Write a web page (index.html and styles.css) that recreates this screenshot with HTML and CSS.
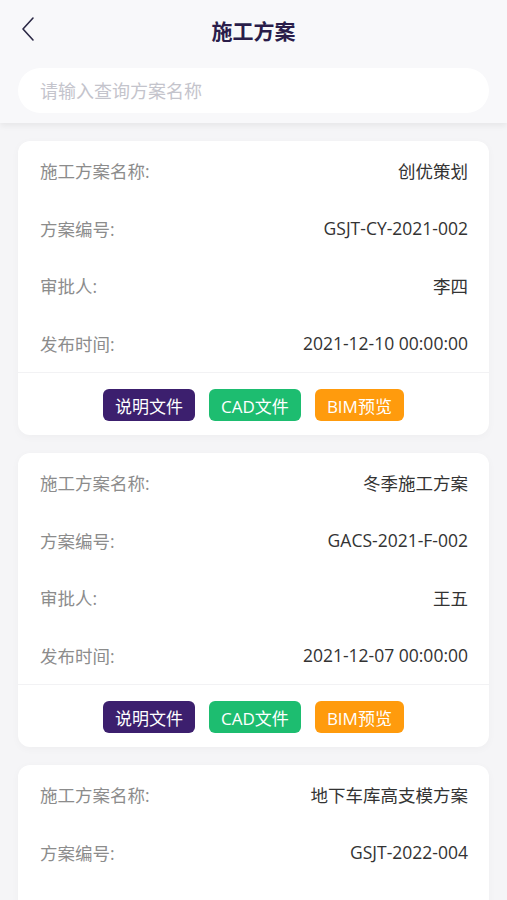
FILE: index.html
```html
<!DOCTYPE html>
<html>
    <head>
        <meta charset="utf-8">
        <meta name="viewport" content="width=device-width, initial-scale=1.0">
        <title>施工方案</title>
        <link rel="stylesheet" href="styles.css">
    </head>
    <body>

        <div class="header">
            <div class="nav">
                <a class="back" href="#">
                    <svg width="16" height="26" viewBox="0 0 16 26">
                        <polyline points="13,2 3,13 13,24" fill="none" stroke="#2b2845" stroke-width="1.6" stroke-linecap="round" stroke-linejoin="round"/>
                    </svg>
                </a>
                <h1 class="title">施工方案</h1>
            </div>
            <div class="search">
                <input type="text" placeholder="请输入查询方案名称">
            </div>
        </div>

        <div class="list">
            <div class="card">
                <div class="row"><span class="label">施工方案名称:</span><span class="value">创优策划</span></div>
                <div class="row"><span class="label">方案编号:</span><span class="value">GSJT-CY-2021-002</span></div>
                <div class="row"><span class="label">审批人:</span><span class="value">李四</span></div>
                <div class="row"><span class="label">发布时间:</span><span class="value">2021-12-10 00:00:00</span></div>
                <div class="actions">
                    <a class="btn btn-doc" href="#">说明文件</a>
                    <a class="btn btn-cad" href="#">CAD文件</a>
                    <a class="btn btn-bim" href="#">BIM预览</a>
                </div>
            </div>

            <div class="card">
                <div class="row"><span class="label">施工方案名称:</span><span class="value">冬季施工方案</span></div>
                <div class="row"><span class="label">方案编号:</span><span class="value">GACS-2021-F-002</span></div>
                <div class="row"><span class="label">审批人:</span><span class="value">王五</span></div>
                <div class="row"><span class="label">发布时间:</span><span class="value">2021-12-07 00:00:00</span></div>
                <div class="actions">
                    <a class="btn btn-doc" href="#">说明文件</a>
                    <a class="btn btn-cad" href="#">CAD文件</a>
                    <a class="btn btn-bim" href="#">BIM预览</a>
                </div>
            </div>

            <div class="card">
                <div class="row"><span class="label">施工方案名称:</span><span class="value">地下车库高支模方案</span></div>
                <div class="row"><span class="label">方案编号:</span><span class="value">GSJT-2022-004</span></div>
                <div class="row"><span class="label">审批人:</span><span class="value">张三</span></div>
                <div class="row"><span class="label">发布时间:</span><span class="value">2022-01-05 00:00:00</span></div>
                <div class="actions">
                    <a class="btn btn-doc" href="#">说明文件</a>
                    <a class="btn btn-cad" href="#">CAD文件</a>
                    <a class="btn btn-bim" href="#">BIM预览</a>
                </div>
            </div>
        </div>

    </body>
</html>
```

FILE: styles.css
```css
body {
    margin: 0;
    height: 100vh;
    overflow: hidden;
    background: #f5f5f7;
    font-family: "Open Sans", "Noto Sans CJK SC", sans-serif;
}

.header {
    background: #f8f8fa;
    padding: 0 18px 10px;
    box-shadow: 0 3px 6px rgba(0, 0, 0, 0.06);
}

.nav {
    position: relative;
    display: flex;
    align-items: center;
    justify-content: center;
    height: 68px;
}

.back {
    /* chevron sits over the centred title */
    position: absolute;
    left: 2px;
    top: 16px;
    display: flex;
}

.title {
    margin: 0 0 8px;
    font-family: "Noto Sans CJK SC", sans-serif;
    font-size: 21px;
    font-weight: 700;
    color: #2a1d4a;
}

.search input {
    box-sizing: border-box;
    width: 100%;
    height: 45px;
    padding: 0 22px;
    border: none;
    border-radius: 23px;
    background: white;
    font-family: inherit;
    font-size: 18px;
    outline: none;
}

.search input::placeholder {
    color: #c4c4cc;
}

.list {
    display: flex;
    flex-direction: column;
    gap: 18px;
    padding: 18px 18px 0;
}

.card {
    background: white;
    border-radius: 12px;
    padding-top: 1px;
    box-shadow: 0 2px 8px rgba(0, 0, 0, 0.03);
}

.row {
    display: flex;
    align-items: center;
    justify-content: space-between;
    height: 57.5px;
    padding: 0 21px 0 22px;
    font-size: 17.5px;
}

.label {
    color: #8c8c8c;
}

.value {
    color: #333;
}

.actions {
    display: flex;
    justify-content: center;
    gap: 14px;
    padding: 16px 0 14px;
    border-top: 1px solid #f2f2f4;
}

.btn {
    display: flex;
    align-items: center;
    height: 32px;
    padding: 0 12px;
    border-radius: 6px;
    color: white;
    font-size: 17px;
    text-decoration: none;
}

.btn-doc {
    background: #3c1f6e;
}

.btn-cad {
    background: #1dbd70;
}

.btn-bim {
    background: #ff9b0d;
}
```
